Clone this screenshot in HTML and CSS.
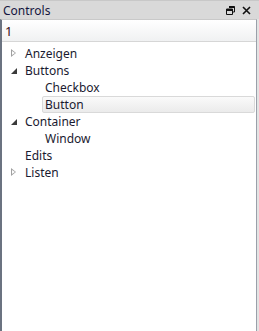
FILE: index.html
```html
<!DOCTYPE html>
<html lang="de">
<head>
  <meta charset="UTF-8" />
  <title>Controls</title>
  <link rel="stylesheet" href="styles.css">
</head>
<body>
  <div class="dock">
    <div class="title-bar">
      <span class="title">Controls</span>
      <div class="title-buttons">
        <svg width="9" height="9" viewBox="0 0 9 9" aria-label="Abdocken">
          <path d="M3 0.5h5.5v5.5h-2M0.5 3h6v5.5h-6z M3 1.5h5" fill="none" stroke="#111" stroke-width="1"/>
          <rect x="0.5" y="3" width="6" height="2" fill="#111"/>
          <rect x="3" y="0.5" width="5.5" height="1.5" fill="#111"/>
        </svg>
        <svg width="9" height="9" viewBox="0 0 9 9" aria-label="Schließen">
          <path d="M1 1l7 7M8 1l-7 7" stroke="#111" stroke-width="1.6"/>
        </svg>
      </div>
    </div>

    <div class="panel">
      <div class="header">1</div>
      <ul class="tree">
        <li class="node"><span class="arrow collapsed"></span>Anzeigen</li>
        <li class="node"><span class="arrow expanded"></span>Buttons</li>
        <li class="node child">Checkbox</li>
        <li class="node child"><span class="selected">Button</span></li>
        <li class="node"><span class="arrow expanded"></span>Container</li>
        <li class="node child">Window</li>
        <li class="node"><span class="arrow"></span>Edits</li>
        <li class="node"><span class="arrow collapsed"></span>Listen</li>
      </ul>
    </div>
  </div>
</body>
</html>
```

FILE: styles.css
```css
body {
  margin: 0;
  padding: 0;
  background: #e8e8ec;
  font-family: "Segoe UI", "Noto Sans", "Liberation Sans", sans-serif;
  font-size: 12px;
  color: #1a1a30;
}
.dock {
  width: 259px;
  height: 331px;
  display: flex;
  flex-direction: column;
  background: #e3e3e3;
}
.title-bar {
  height: 19px;
  display: flex;
  justify-content: space-between;
  align-items: center;
  padding: 0 8px 0 3px;
  background: #d9d9d9;
  border-top: 1px solid #c8c8c8;
  box-sizing: border-box;
  color: #151540;
}
.title-buttons {
  display: flex;
  gap: 7px;
  align-items: center;
}
.panel {
  flex: 1;
  margin-right: 2px;
  background: white;
  border-left: 2px solid #6b7381;
  border-right: 1px solid #9aa0aa;
  border-top: 1px solid #c9c9c9;
}
.header {
  height: 21px;
  line-height: 22px;
  padding-left: 3px;
  color: #3a0c14;
  font-size: 13px;
  background: linear-gradient(#ffffff, #f0f1f2);
  border-bottom: 1px solid #d6d6d6;
}
.tree {
  list-style: none;
  margin: 3px 0 0 0;
  padding: 0;
}
.node {
  height: 17px;
  line-height: 17px;
  display: flex;
  align-items: center;
  padding-left: 8px;
}
.node.child {
  padding-left: 43px;
}
.arrow {
  width: 15px;
  height: 17px;
  position: relative;
  flex: none;
}
.arrow.collapsed::before {
  content: "";
  position: absolute;
  left: 1px;
  top: 4px;
  border-left: 5px solid #a0a0a0;
  border-top: 4.5px solid transparent;
  border-bottom: 4.5px solid transparent;
}
.arrow.collapsed::after {
  content: "";
  position: absolute;
  left: 2px;
  top: 6px;
  border-left: 3px solid white;
  border-top: 2.5px solid transparent;
  border-bottom: 2.5px solid transparent;
}
.arrow.expanded::before {
  content: "";
  position: absolute;
  left: 1px;
  top: 6px;
  border-bottom: 6px solid #3a3a3a;
  border-left: 6px solid transparent;
}
.selected {
  display: block;
  flex: 1;
  margin-left: -3px;
  margin-right: 1px;
  padding-left: 2px;
  height: 15px;
  line-height: 15px;
  border: 1px solid #d9d9d9;
  border-radius: 2px;
  background: linear-gradient(#fafafa, #ebebeb);
}
```
